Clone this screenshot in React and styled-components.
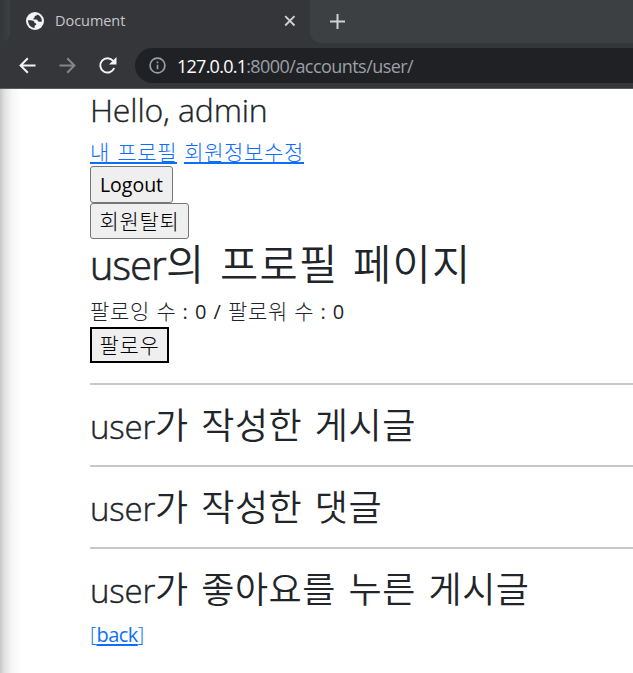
import React from 'react';
import styled, { createGlobalStyle } from 'styled-components';

const Global = createGlobalStyle`
  * { box-sizing: border-box; }
  body { margin: 0; background: #fff; overflow: hidden; }
`;

const Browser = styled.div`
  width: 633px;
  height: 673px;
  display: flex;
  flex-direction: column;
  overflow: hidden;
  font-family: "Open Sans", "Noto Sans CJK KR", sans-serif;
`;

const TabStrip = styled.div`
  height: 43px;
  flex: none;
  display: flex;
  background: #35363a;
`;

const StripEdge = styled.div`
  width: 10px;
  height: 42px;
  background: linear-gradient(90deg, #323638, #3c4043);
  border-bottom-right-radius: 9px;
`;

const Tab = styled.div`
  width: 300px;
  height: 43px;
  display: flex;
  align-items: center;
  padding: 0 14px 1px 16px;
  background: #35363a;
`;

const TabTitle = styled.span`
  flex: 1;
  margin-left: 11px;
  font-size: 14.5px;
  line-height: 20px;
  letter-spacing: -0.05px;
  color: #c6c8cb;
`;

const StripRest = styled.div`
  flex: 1;
  height: 43px;
  display: flex;
  align-items: center;
  padding: 0 0 1px 20px;
  background: #3c4043;
  border-bottom-left-radius: 11px;
`;

const Toolbar = styled.div`
  height: 46px;
  flex: none;
  display: flex;
  align-items: center;
  padding-left: 18px;
  background: #35363a;
  border-bottom: 1px solid #5b5c60;
`;

const NavIcon = styled.svg`
  flex: none;
  width: 20px;
  height: 20px;
  margin-right: ${(p) => p.$gap}px;
`;

const AddressBar = styled.div`
  flex: 1;
  height: 35px;
  display: flex;
  align-items: center;
  padding-left: 14px;
  border-radius: 18px 0 0 18px;
  background: #202124;
`;

const Url = styled.span`
  margin: 0 0 0 11px;
  font-size: 18px;
  line-height: 24px;
  letter-spacing: -0.55px;
  color: #9aa0a6;
  white-space: pre;
`;

const Host = styled.span`
  color: #fff;
  letter-spacing: -0.75px;
`;

const Page = styled.main`
  flex: 1;
  padding-left: 90px;
  color: #212529;
  background: linear-gradient(90deg, #c8c8c8 0, #e3e3e3 5px, #f6f6f6 12px, #fff 21px);
`;

const Line = styled.div`
  height: ${(p) => p.$h}px;
  line-height: ${(p) => p.$h}px;
  font-size: ${(p) => p.$size}px;
  white-space: pre;
`;

const Latin = styled.span`
  font-weight: ${(p) => p.$weight || 400};
  letter-spacing: ${(p) => p.$track || 0}px;
  -webkit-text-stroke: ${(p) => p.$stroke || 0}px currentColor;
`;

const Korean = styled.span`
  font-family: "Noto Sans CJK KR", sans-serif;
  font-weight: ${(p) => p.$weight || 300};
  font-size: ${(p) => p.$size}px;
  letter-spacing: ${(p) => p.$track || 0}px;
  word-spacing: ${(p) => p.$word || 0}px;
`;

const Link = styled.a`
  display: inline-block;
  height: 23px;
  line-height: 20px;
  margin-right: 7px;
  color: #0d6efd;
  border-bottom: ${(p) => (p.$bare ? 0 : 2)}px solid #0d6efd;
`;

const LinkLine = styled(Line)`
  display: flex;
  align-items: flex-start;
`;

const BackWord = styled.span`
  text-decoration: underline;
  text-decoration-thickness: 2px;
  text-underline-offset: 2px;
  letter-spacing: -0.5px;
`;

const Button = styled.button`
  display: flex;
  align-items: center;
  justify-content: center;
  width: ${(p) => p.$w}px;
  height: ${(p) => p.$h}px;
  padding: 0 0 ${(p) => p.$lift || 0}px;
  font-family: inherit;
  font-size: 19.5px;
  line-height: 28px;
  color: #000;
  background: #efefef;
  border: ${(p) => (p.$focused ? '2px solid #000' : '1px solid #767676')};
  border-radius: ${(p) => (p.$focused ? 0 : 3)}px;
`;

const Rule = styled.hr`
  height: 2px;
  margin: 0;
  border: 0;
  background: #c8c8c9;
`;

const Gap = styled.div`
  height: ${(p) => p.$h}px;
`;

function Section({ title }) {
  return (
    <>
      <Rule />
      <Gap $h={14} />
      <Line $h={48} $size={33}>
        <Latin $weight={300} $stroke={0.4} $track={-0.2}>user</Latin>
        <Korean $weight={350} $size={36} $track={0.55} $word={4}>{title}</Korean>
      </Line>
    </>
  );
}

export default function App() {
  return (
    <Browser>
      <Global />
      <TabStrip>
        <StripEdge />
        <Tab>
          <svg width="18" height="18" viewBox="0 0 18 18">
            <circle cx="9" cy="9" r="9" fill="#f1f3f4" />
            <path d="M2 8.200c2.200-.2 4.500 0 5.600.8.900.7.300 1.500 1.300 1.900.900.300 1.500.400 1.300 1.500-.2 1-1.700.700-1.600 1.800v1.800c-3.700-.3-6.600-3.500-6.600-7.800Z" fill="#35363a" />
            <path d="M11.200 2.400c-.3 1.200-1.400 1-2.200 1.500-.9.600.1 1.500-.9 2.100-.9.500-1.300 1.200-.3 1.600h2.700c1.200.2.900 1.500 1.900 1.800 1 .200 2.200.8 3.500-.1.100-3-1.600-5.800-4.700-6.900Z" fill="#35363a" />
          </svg>
          <TabTitle>Document</TabTitle>
          <svg width="12" height="12" viewBox="0 0 12 12" fill="none" stroke="#d0d1d3" strokeWidth="1.9">
            <path d="M1.200 1.200 10.500 10.500M10.500 1.200 1.200 10.500" />
          </svg>
        </Tab>
        <StripRest>
          <svg width="15" height="15" viewBox="0 0 15 15" fill="none" stroke="#d0d1d3" strokeWidth="2">
            <path d="M7.500 0v15M0 7.500h15" />
          </svg>
        </StripRest>
      </TabStrip>
      <Toolbar>
        <NavIcon $gap={20} viewBox="0 0 20 20" fill="none" stroke="#f1f3f4" strokeWidth="2">
          <path d="M17.500 9.500H3M9.800 2.300 2.600 9.500l7.200 7.200" />
        </NavIcon>
        <NavIcon $gap={20} viewBox="0 0 20 20" fill="none" stroke="#85868a" strokeWidth="2">
          <path d="M1.500 9.500H16M9.200 2.300l7.200 7.200-7.200 7.200" />
        </NavIcon>
        <NavIcon $gap={17} viewBox="0 0 20 20" fill="none">
          <path d="M15.200 5A7.200 7.200 0 1 0 16.200 12" stroke="#f1f3f4" strokeWidth="2" />
          <path d="M18.500 1v7.500H11Z" fill="#f1f3f4" />
        </NavIcon>
        <AddressBar>
          <svg width="17" height="17" viewBox="0 0 17 17" fill="none" stroke="#9aa0a6" strokeWidth="1.700">
            <circle cx="8.500" cy="8.500" r="7.400" />
            <path d="M8.500 7.700v4.600M8.500 4.400v1.900" />
          </svg>
          <Url><Host>127.0.0.1</Host>:8000/accounts/user/</Url>
        </AddressBar>
      </Toolbar>
      <Page>
        <Line $h={41} $size={32}><Latin $weight={300} $stroke={0.35} $track={-0.15}>Hello, admin</Latin></Line>
        <Gap $h={11} />
        <LinkLine $h={25} $size={20}>
          <Link><Korean $size={21} $track={0.65} $word={2}>내 프로필</Korean></Link>
          <Link><Korean $size={21} $track={0.65}>회원정보수정</Korean></Link>
        </LinkLine>
        <Button $w={83} $h={37}><Latin>Logout</Latin></Button>
        <Button $w={99} $h={36} $lift={2}><Korean $size={21} $track={0.7}>회원탈퇴</Korean></Button>
        <Line $h={47} $size={39.5}>
          <Latin $weight={300} $stroke={0.7} $track={-0.7}>user</Latin>
          <Korean $weight={350} $size={41.5} $track={1.3} $word={4}>의 프로필 페이지</Korean>
        </Line>
        <Gap $h={10} />
        <Line $h={29} $size={20}>
          <Korean $size={21} $track={0.7} $word={1}>팔로잉 수</Korean>
          <Latin $track={0.95}> : 0 / </Latin>
          <Korean $size={21} $track={0.7} $word={1}>팔로워 수</Korean>
          <Latin $track={0.95}> : 0</Latin>
        </Line>
        <Gap $h={2} />
        <Button $focused $w={79} $h={36} $lift={3}><Korean $size={21} $track={0.7}>팔로우</Korean></Button>
        <Gap $h={20} />
        <Section title="가 작성한 게시글" />
        <Gap $h={18} />
        <Section title="가 작성한 댓글" />
        <Gap $h={18} />
        <Section title="가 좋아요를 누른 게시글" />
        <Gap $h={8} />
        <Line $h={32} $size={20}>
          <Link $bare><Latin $weight={300}>[</Latin><BackWord>back</BackWord><Latin $weight={300}>]</Latin></Link>
        </Line>
      </Page>
    </Browser>
  );
}
